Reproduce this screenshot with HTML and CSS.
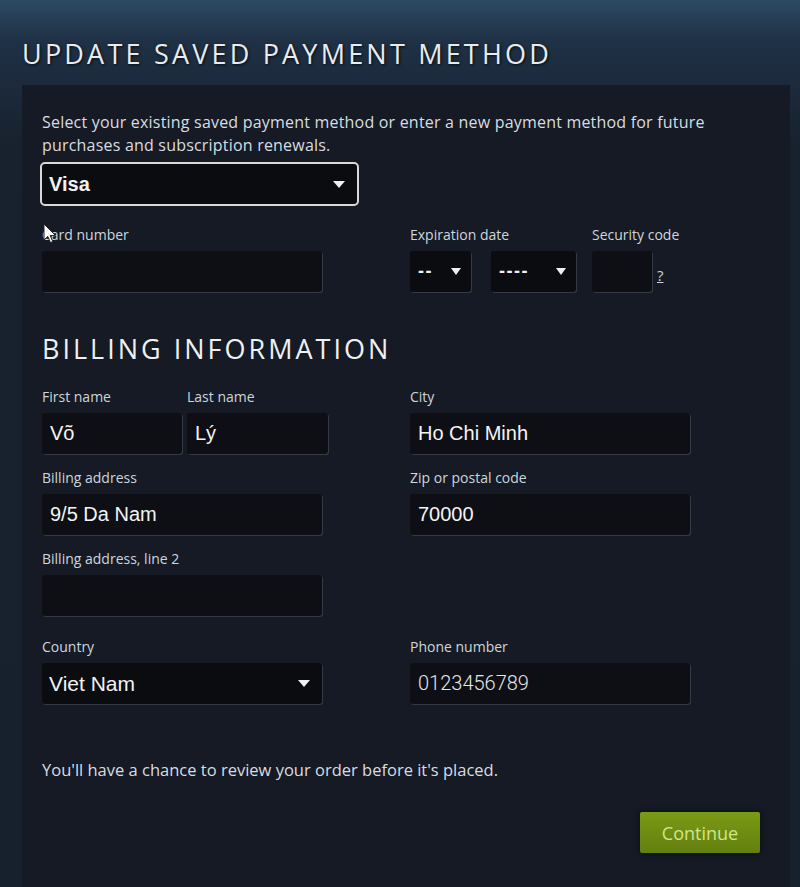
FILE: index.html
```html
<!DOCTYPE html>
<html>
<head>
  <meta charset='utf-8'>
  <title>Update saved payment method</title>
  <meta name='viewport' content='width=device-width, initial-scale=1'>
  <link rel="stylesheet" href="styles.css">
</head>
<body>
  <div class="page">
    <h1 class="page-title">UPDATE SAVED PAYMENT METHOD</h1>
    <section class="panel">
      <p class="intro">Select your existing saved payment method or enter a new payment method for future purchases and subscription renewals.</p>
      <div class="dropdown dropdown-method">
        <span>Visa</span>
        <span class="caret"></span>
      </div>

      <div class="card-row">
        <div class="field field-card">
          <label>Card number</label>
          <div class="input"></div>
          <svg class="cursor" width="14" height="21" viewBox="0 0 14 21">
            <path d="M1 1 L1 17 L4.8 13.4 L7.5 19.6 L9.8 18.6 L7.2 12.6 L12.4 12.4 Z" fill="#fff" stroke="#222" stroke-width="1"/>
          </svg>
        </div>
        <div class="field field-exp">
          <label>Expiration date</label>
          <div class="exp-selects">
            <div class="dropdown dropdown-small dropdown-month"><span>--</span><span class="caret"></span></div>
            <div class="dropdown dropdown-small dropdown-year"><span>----</span><span class="caret"></span></div>
          </div>
        </div>
        <div class="field field-cvv">
          <label>Security code</label>
          <div class="cvv-line">
            <div class="input input-cvv"></div>
            <a class="help">?</a>
          </div>
        </div>
      </div>

      <h2 class="section-title">BILLING INFORMATION</h2>

      <div class="billing-grid">
        <div class="name-pair">
          <div class="field">
            <label>First name</label>
            <div class="input">Võ</div>
          </div>
          <div class="field">
            <label>Last name</label>
            <div class="input">Lý</div>
          </div>
        </div>
        <div class="field">
          <label>City</label>
          <div class="input">Ho Chi Minh</div>
        </div>

        <div class="field">
          <label>Billing address</label>
          <div class="input input-left">9/5 Da Nam</div>
        </div>
        <div class="field">
          <label>Zip or postal code</label>
          <div class="input">70000</div>
        </div>

        <div class="field">
          <label>Billing address, line 2</label>
          <div class="input input-left"></div>
        </div>
        <div></div>

        <div class="field field-country">
          <label>Country</label>
          <div class="dropdown dropdown-country"><span>Viet Nam</span><span class="caret"></span></div>
        </div>
        <div class="field field-country">
          <label>Phone number</label>
          <div class="input input-phone">0123456789</div>
        </div>
      </div>

      <p class="review-note">You'll have a chance to review your order before it's placed.</p>

      <div class="actions">
        <button class="btn-continue">Continue</button>
      </div>
    </section>
  </div>
</body>
</html>
```

FILE: styles.css
```css
*, *:before, *:after {
  box-sizing: inherit;
}
html {
  box-sizing: border-box;
  height: 100%;
}
html, body {
  margin: 0;
  padding: 0;
  font-family: "Open Sans", "Noto Sans", sans-serif;
  color: #c6d4df;
  overflow: hidden;
}
body {
  background: linear-gradient(to bottom, #2c4a63 0, #1f3146 40px, #18222f 140px, #17202d 100%);
  min-height: 100%;
}
.page {
  padding: 38px 10px 0 22px;
}
.page-title {
  margin: 0 0 15px 0;
  font-size: 27px;
  font-weight: 400;
  letter-spacing: 3.2px;
  line-height: 32px;
  color: #e8ecef;
  text-shadow: 1px 1px 3px rgba(0, 0, 0, .8);
}
.panel {
  background: #151a24;
  padding: 26px 30px 40px 20px;
  min-height: 810px;
}
.intro {
  margin: 0;
  font-size: 16px;
  line-height: 23px;
  letter-spacing: .2px;
  color: #d8dde2;
  max-width: 700px;
}
.dropdown {
  display: flex;
  align-items: center;
  justify-content: space-between;
  background: #0b0c10;
  border-radius: 3px;
  color: #f2f2f2;
  box-shadow: 1px 1px 0 rgba(200, 210, 220, .18);
}
.caret {
  width: 0;
  height: 0;
  border-left: 6px solid transparent;
  border-right: 6px solid transparent;
  border-top: 7px solid #f0f0f0;
}
.dropdown-method {
  margin-top: 5px;
  margin-left: -2px;
  width: 319px;
  height: 44px;
  border: 2px solid #d8d8d8;
  border-radius: 5px;
  padding: 0 12px 0 7px;
  font-family: "Liberation Sans", Arial, sans-serif;
  font-weight: bold;
  font-size: 20px;
  box-shadow: none;
}
.card-row {
  display: flex;
  margin-top: 20px;
}
.field {
  position: relative;
}
.field label {
  display: block;
  font-size: 14px;
  line-height: 18px;
  margin-bottom: 7px;
  color: #cdd6de;
}
.input {
  height: 41px;
  background: #0d0f14;
  border-radius: 3px;
  box-shadow: 1px 1px 0 rgba(200, 210, 220, .18);
  font-family: "Liberation Sans", Arial, sans-serif;
  font-size: 20px;
  line-height: 41px;
  padding: 0 8px;
  color: #f4f4f4;
}
.field-card {
  width: 280px;
  margin-right: 88px;
}
.cursor {
  position: absolute;
  top: -3px;
  left: 1px;
}
.exp-selects {
  display: flex;
  gap: 20px;
}
.dropdown-small {
  height: 41px;
  padding: 0 10px 0 8px;
  font-family: "Liberation Sans", Arial, sans-serif;
  font-weight: bold;
  font-size: 18px;
  letter-spacing: 1.5px;
}
.dropdown-month {
  width: 61px;
}
.dropdown-year {
  width: 85px;
}
.dropdown-small .caret {
  border-left-width: 5px;
  border-right-width: 5px;
  border-top-width: 7px;
}
.field-exp {
  margin-right: 16px;
}
.cvv-line {
  display: flex;
  align-items: center;
}
.input-cvv {
  width: 60px;
}
.help {
  margin-left: 5px;
  margin-top: 6px;
  font-size: 15px;
  color: #c6d4df;
  text-decoration: underline;
}
.section-title {
  margin: 41px 0 23px 0;
  font-size: 27px;
  font-weight: 400;
  letter-spacing: 3px;
  line-height: 32px;
  color: #eef1f3;
}
.billing-grid {
  display: grid;
  grid-template-columns: 286px 280px;
  column-gap: 82px;
  row-gap: 15px;
}
.name-pair {
  display: grid;
  grid-template-columns: 140px 141px;
  column-gap: 5px;
}
.input-left {
  width: 280px;
}
.field-country {
  margin-top: 7px;
}
.dropdown-country {
  width: 280px;
  height: 41px;
  padding: 0 12px 0 7px;
  font-family: "Liberation Sans", Arial, sans-serif;
  font-size: 21px;
}
.input-phone {
  font-family: Roboto, sans-serif;
  font-weight: 300;
  font-size: 20px;
  color: #e6e6e6;
}
.review-note {
  margin: 55px 0 0 0;
  font-size: 16.5px;
  line-height: 22px;
  color: #d8dde2;
}
.actions {
  display: flex;
  justify-content: flex-end;
  margin-top: 31px;
}
.btn-continue {
  width: 120px;
  height: 41px;
  border: none;
  border-radius: 2px;
  background: linear-gradient(to bottom, #7b9a14 0, #637f10 100%);
  color: #cfe68a;
  font-family: "Open Sans", sans-serif;
  font-size: 18px;
  box-shadow: 0 0 6px rgba(0, 0, 0, .6);
}
```
